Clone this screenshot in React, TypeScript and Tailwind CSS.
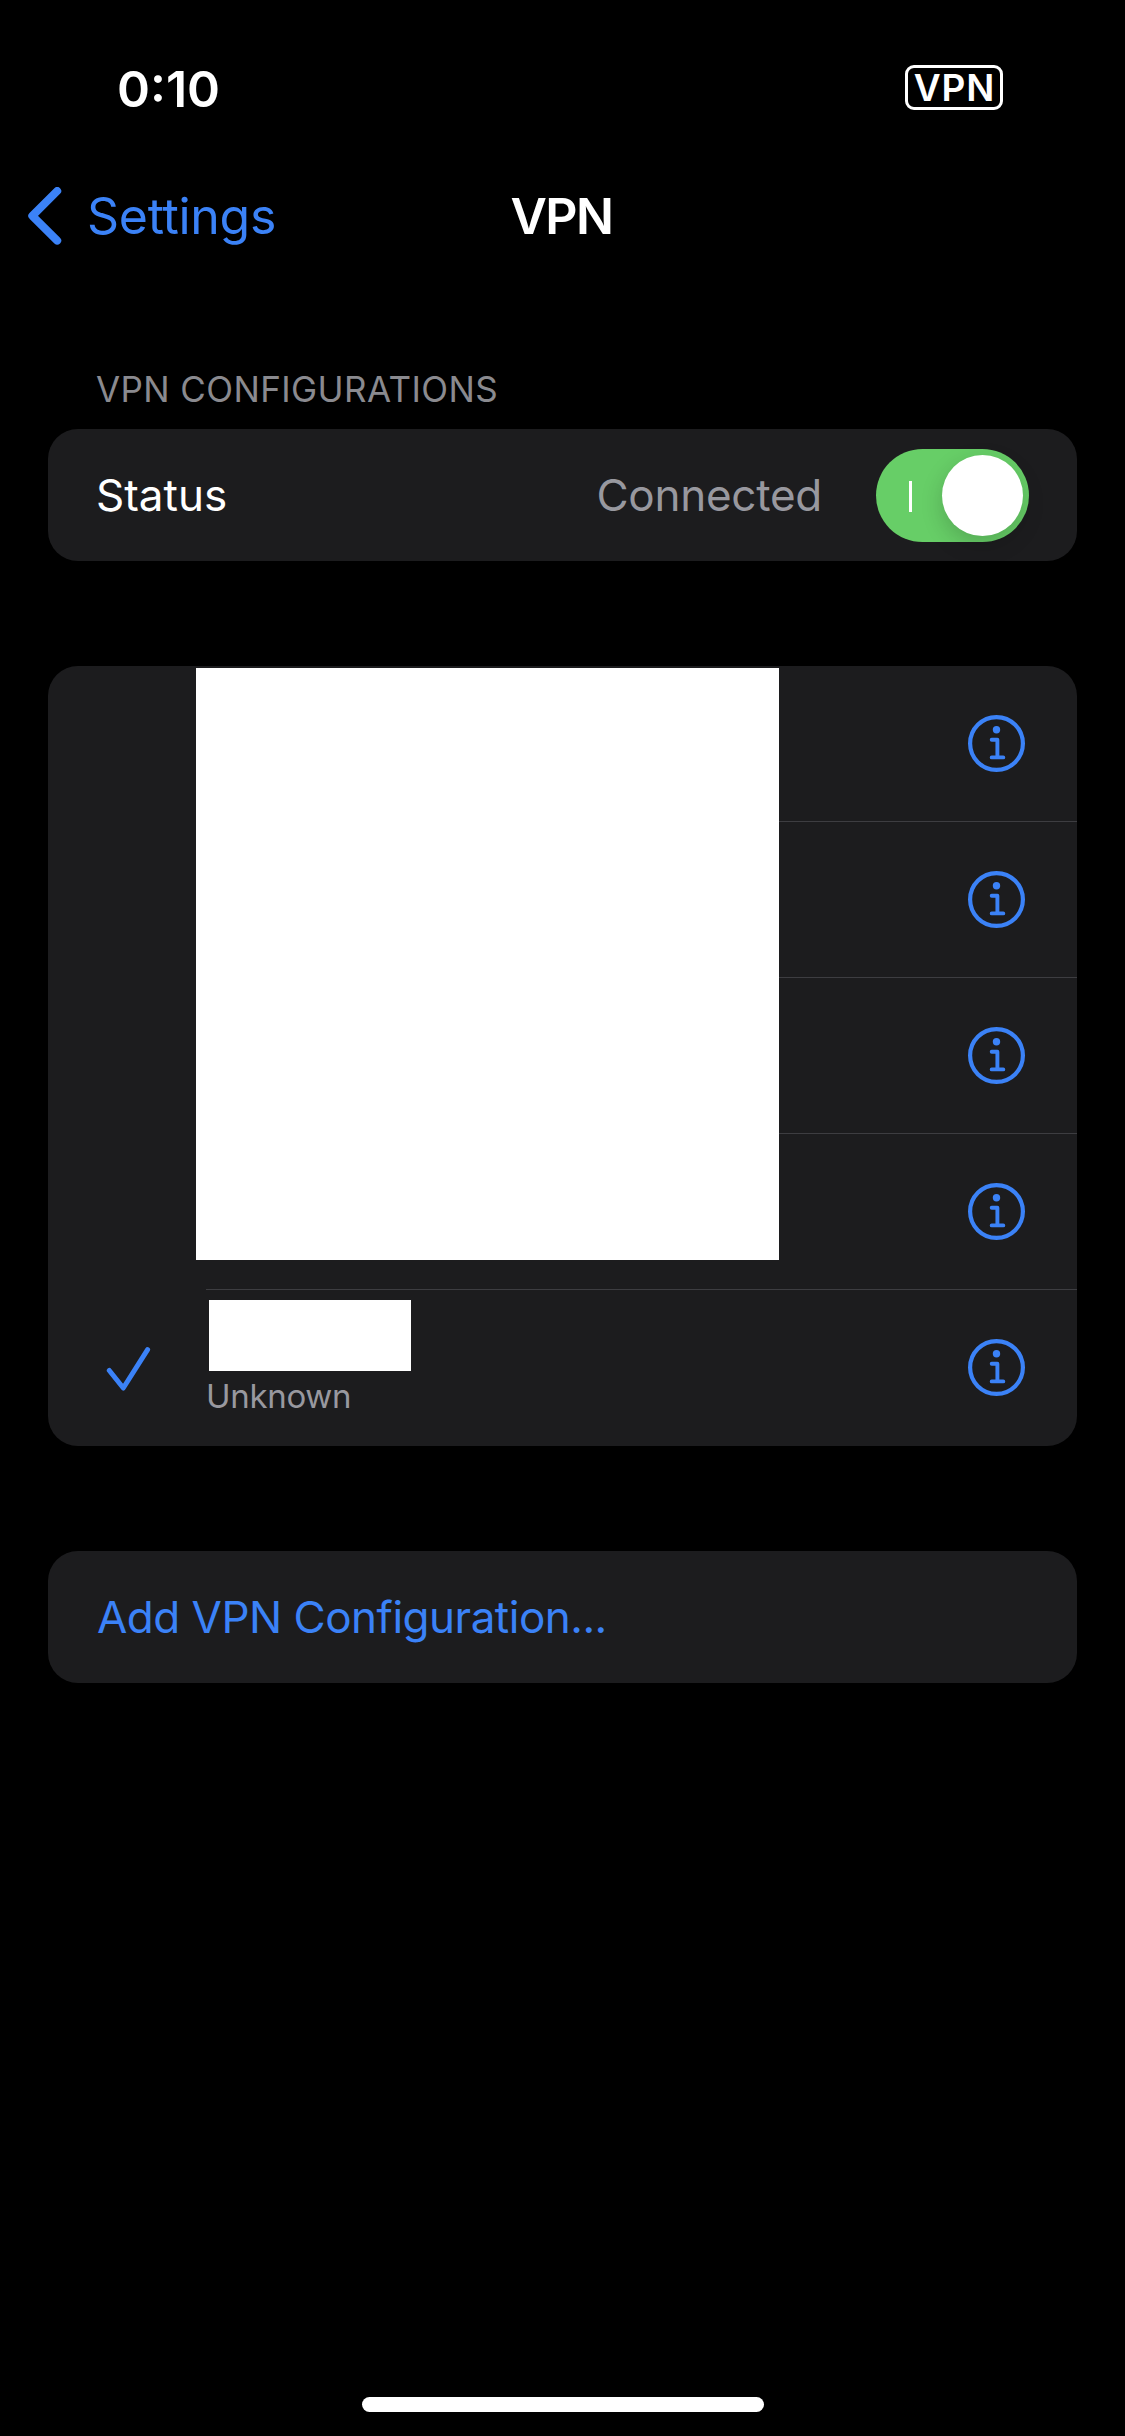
import { clsx } from "clsx";

const InfoIcon = () => (
  <svg width="57" height="57" viewBox="0 0 57 57" fill="none" stroke="#3b82f7" aria-label="More info">
    <circle cx="28.5" cy="28.5" r="26.4" strokeWidth="4.2" />
    <circle cx="28.5" cy="14.7" r="3.7" fill="#3b82f7" stroke="none" />
    <path d="M23.7 24.8h5.7V42.4M23.7 42.4h11.6" strokeWidth="3.9" strokeLinecap="round" strokeLinejoin="round" />
  </svg>
);

const rows = [
  { id: 1, selected: false },
  { id: 2, selected: false },
  { id: 3, selected: false },
  { id: 4, selected: false },
  { id: 5, selected: true, detail: "Unknown" },
];

const StatusBar = () => (
  <div className="flex h-[88px] w-full items-end justify-between pl-[117px] pr-[122px]">
    <span className="h-[43px] text-[50px] font-semibold leading-[44px]">0:10</span>
    <div className="flex h-[45px] w-[98px] items-center justify-center rounded-[9px] border-[3px] border-white">
      <span className="pl-px text-[37px] font-semibold leading-none tracking-[0.8px]">VPN</span>
    </div>
  </div>
);

const NavBar = () => (
  <div className="grid h-[80px] w-full grid-cols-3 items-center px-[27px]">
    <button className="flex items-center gap-[24px] text-[#3b82f7]">
      <svg width="36" height="58" viewBox="0 0 36 58" fill="none" stroke="currentColor" strokeWidth="8" strokeLinecap="round" strokeLinejoin="round">
        <path d="M30.2 4L5.3 28.8l24.9 24.8" />
      </svg>
      <span className="text-[50px] leading-[60px] tracking-[-0.3px]">Settings</span>
    </button>
    <h1 className="pr-[2px] text-center text-[50px] font-semibold leading-[60px] tracking-[-1.5px]">VPN</h1>
  </div>
);

const Toggle = () => (
  <div className="flex h-[93px] w-[153px] items-center justify-between rounded-full bg-[#67ce67] pl-[33px] pr-[6px]">
    <span className="mt-[3px] h-[31px] w-[3px] bg-white" />
    <span className="size-[81px] rounded-full bg-white shadow-[0_8px_22px_rgba(0,0,0,0.18)]" />
  </div>
);

export default function App() {
  return (
    <main className="flex h-[2436px] w-[1125px] flex-col overflow-hidden bg-black font-['Inter','Liberation_Sans',sans-serif] text-white">
      <div className="pt-[22px]">
        <StatusBar />
      </div>
      <div className="pt-[66px]">
        <NavBar />
      </div>

      <div className="flex flex-col px-[48px] pt-[113px]">
        <h2 className="mb-[19px] pl-[48px] text-[35px] leading-[41px] tracking-[0.4px] text-[#8a8a8f]">VPN CONFIGURATIONS</h2>

        <section className="flex h-[132px] items-center rounded-[30px] bg-[#1c1c1e] pl-[48px] pr-[48px]">
          <span className="text-[44px] leading-[56px]">Status</span>
          <span className="ml-auto mr-[54px] text-[44px] leading-[56px] tracking-[-0.25px] text-[#98989f]">Connected</span>
          <Toggle />
        </section>

        <section className="relative mt-[105px] flex flex-col rounded-[30px] bg-[#1c1c1e]">
          {rows.map((row, index) => (
            <div key={row.id} className="flex h-[156px]">
              <div className="flex w-[158px] items-center pl-[58px] pt-px">
                {row.selected && (
                  <svg width="46" height="46" viewBox="0 0 46 46" fill="none" stroke="#3b82f7" strokeWidth="5" strokeLinecap="round" strokeLinejoin="round">
                    <path d="M3.3 24.5L17.3 42L41.6 3.7" />
                  </svg>
                )}
              </div>
              <div
                className={clsx(
                  "flex flex-1 items-center justify-between border-b pr-[52px]",
                  index < rows.length - 1 ? "border-[#3d3d41]" : "border-transparent"
                )}
              >
                <div className="flex flex-col pb-[19px] pl-[3px]">
                  {row.detail && (
                    <>
                      <span className="h-[71px] w-[202px] bg-white" />
                      <span className="-ml-[3px] mt-[5px] text-[33px] leading-[40px] tracking-[-0.3px] text-[#98989f]">{row.detail}</span>
                    </>
                  )}
                </div>
                <InfoIcon />
              </div>
            </div>
          ))}
          {/* covers the names of the first four configurations */}
          <div className="absolute left-[148px] top-[2px] h-[592px] w-[583px] bg-white" />
        </section>

        <section className="mt-[105px] flex h-[132px] items-center rounded-[30px] bg-[#1c1c1e] pl-[49px]">
          <button className="text-[44px] leading-[56px] tracking-[-0.5px] text-[#3b82f7]">Add VPN Configuration...</button>
        </section>
      </div>

      <div className="mx-auto mb-[24px] mt-auto h-[15px] w-[402px] rounded-full bg-white" />
    </main>
  );
}
